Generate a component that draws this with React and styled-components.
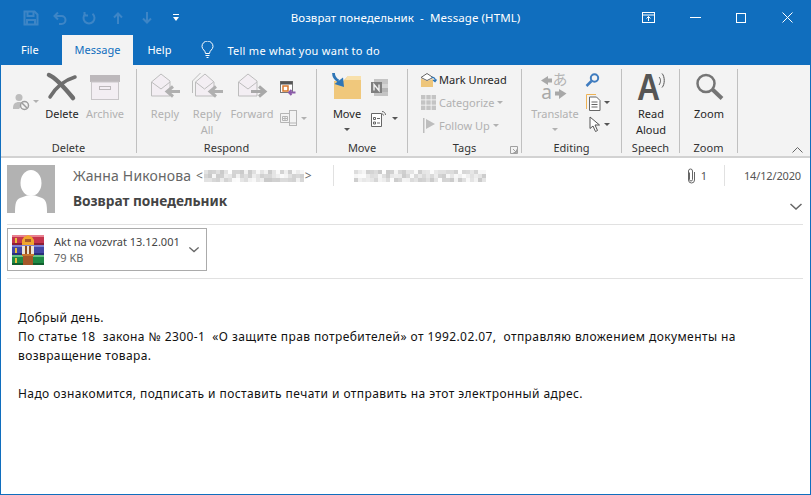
import React from 'react';
import styled, { createGlobalStyle } from 'styled-components';

const GlobalStyle = createGlobalStyle`
  html, body {
    margin: 0;
    padding: 0;
    background: #ffffff;
  }
  body {
    font-family: "Noto Sans", "Open Sans", sans-serif;
    font-size: 12px;
    color: #262626;
    overflow: hidden;
  }
`;

const Window = styled.div`
  width: 811px;
  height: 495px;
  box-sizing: border-box;
  border-left: 1px solid #106ebe;
  border-right: 1px solid #106ebe;
  border-bottom: 1px solid #106ebe;
  display: flex;
  flex-direction: column;
  background: #fff;
  overflow: hidden;
`;

const TitleBar = styled.div`
  height: 35px;
  flex: none;
  background: #106ebe;
  color: #fff;
  display: grid;
  grid-template-columns: 1fr auto 1fr;
  align-items: center;
`;

const Qat = styled.div`
  display: flex;
  align-items: center;
  padding-left: 15px;
`;

const QatBtn = styled.div`
  width: 29px;
  display: flex;
  justify-content: center;
  svg { display: block; }
`;

const Title = styled.div`
  font-size: 11.5px;
  letter-spacing: 0.08px;
  white-space: pre;
`;

const WindowButtons = styled.div`
  display: flex;
  justify-content: flex-end;
  align-items: center;
  svg { display: block; }
`;

const WinBtn = styled.div`
  width: 46px;
  height: 32px;
  display: flex;
  align-items: center;
  justify-content: center;
`;

const TabRow = styled.div`
  height: 30px;
  flex: none;
  background: #106ebe;
  display: flex;
  align-items: stretch;
  color: #fff;
  font-size: 11px;
`;

const Tab = styled.div`
  padding: 0 ${p => p.$r}px 1px ${p => p.$l}px;
  display: flex;
  align-items: center;
  background: ${p => (p.$active ? '#f3f3f3' : 'transparent')};
  color: ${p => (p.$active ? '#106ebe' : '#fff')};
`;

const TellMe = styled.div`
  display: flex;
  align-items: center;
  gap: 13px;
  margin-left: 16px;
  letter-spacing: 0.27px;
`;

const Ribbon = styled.div`
  height: 93px;
  flex: none;
  box-sizing: border-box;
  background: #f3f3f3;
  border-bottom: 2px solid #d2d2d2;
  padding-top: 4px;
  display: flex;
  position: relative;
`;

const Group = styled.div`
  width: ${p => p.$w}px;
  flex: none;
  box-sizing: border-box;
  height: 84px;
  border-right: 1px solid #c0c0c0;
  display: flex;
  flex-direction: column;
`;

const GroupBody = styled.div`
  flex: 1;
  display: flex;
  min-height: 0;
`;

const GroupLabel = styled.div`
  height: 12px;
  flex: none;
  line-height: 14px;
  text-align: center;
  font-size: 11px;
  color: #333;
  position: relative;
`;

const Launcher = styled.svg`
  position: absolute;
  right: 3px;
  top: 5px;
`;

const Big = styled.div`
  width: ${p => p.$w}px;
  margin-left: ${p => p.$ml || 0}px;
  flex: none;
  display: flex;
  flex-direction: column;
  align-items: center;
  font-size: 11px;
  line-height: 16px;
  text-align: center;
  color: ${p => (p.$off ? '#b1b1b1' : '#262626')};
`;

const BigIcon = styled.div`
  height: 31px;
  flex: none;
  display: flex;
  align-items: flex-end;
  justify-content: center;
  margin-bottom: 6px;
  svg { display: block; overflow: visible; }
`;

const Stack = styled.div`
  width: ${p => p.$w}px;
  margin-left: ${p => p.$ml || 0}px;
  flex: none;
  display: flex;
  flex-direction: column;
  padding-top: ${p => p.$pt || 0}px;
  gap: ${p => p.$gap || 0}px;
`;

const SmallRow = styled.div`
  display: flex;
  align-items: center;
  box-sizing: border-box;
  height: ${p => p.$h || 23}px;
  gap: ${p => p.$gap ?? 3}px;
  padding-left: ${p => p.$pl || 0}px;
  padding-bottom: ${p => p.$pb || 0}px;
  font-size: 11px;
  color: ${p => (p.$off ? '#b1b1b1' : '#262626')};
  svg { display: block; flex: none; }
`;

const Caret = styled.span`
  display: inline-block;
  width: 0;
  height: 0;
  border-left: 3px solid transparent;
  border-right: 3px solid transparent;
  border-top: 3px solid ${p => p.$c || '#555'};
  margin-top: ${p => p.$mt || 0}px;
  flex: none;
`;

const CollapseBtn = styled.svg`
  position: absolute;
  right: 7px;
  bottom: 3px;
`;

const Header = styled.div`
  flex: none;
  padding: 0 7px 0 6px;
`;

const HeaderTop = styled.div`
  display: flex;
  height: 67px;
  box-sizing: border-box;
  border-bottom: 1px solid #e1e1e1;
  padding-top: 7px;
`;

const Avatar = styled.svg`
  display: block;
  flex: none;
  margin-right: 18px;
`;

const HeaderInfo = styled.div`
  flex: 1;
  min-width: 0;
  display: flex;
  flex-direction: column;
`;

const FromRow = styled.div`
  display: flex;
  align-items: center;
  height: 21px;
  font-size: 14px;
  color: #666;
  padding-right: 2px;
`;

const Sender = styled.span`
  white-space: pre;
  letter-spacing: 0.15px;
`;

const Angle = styled.span`
  font-size: 12px;
  margin: 0 1px;
`;

const Mosaic = styled.svg`
  display: block;
  flex: none;
`;

const Divider = styled.div`
  width: 1px;
  height: 21px;
  background: #e1e1e1;
  flex: none;
  margin-left: ${p => p.$ml}px;
  margin-right: ${p => p.$mr}px;
`;

const Spacer = styled.div`
  flex: 1;
`;

const AttachCount = styled.span`
  font-size: 11px;
  color: #555;
  margin: 0 17px 0 6px;
`;

const DateText = styled.span`
  font-size: 11px;
  color: #555;
  letter-spacing: -0.15px;
`;

const SubjectRow = styled.div`
  display: flex;
  align-items: center;
  justify-content: space-between;
  margin-top: 3px;
  height: 22px;
  padding-right: 1px;
  svg { margin-top: 12px; display: block; }
`;

const Subject = styled.div`
  font-size: 13.7px;
  font-weight: 700;
  color: #444;
`;

const AttachArea = styled.div`
  height: 54px;
  box-sizing: border-box;
  border-bottom: 1px solid #e1e1e1;
  padding-top: 3px;
`;

const AttachCard = styled.div`
  width: 200px;
  height: 43px;
  box-sizing: border-box;
  border: 1px solid #ababab;
  display: flex;
  align-items: center;
  padding-left: 4px;
  svg { display: block; flex: none; }
  > svg:last-child { margin-right: 7px; }
`;

const AttachText = styled.div`
  margin-left: 9px;
  flex: 1;
  font-size: 11px;
  line-height: 16px;
  color: #444;
`;

const AttachSize = styled.div`
  color: #666;
`;

const Body = styled.div`
  padding: 29px 0 0 17px;
  font-size: 12px;
  line-height: 19px;
  letter-spacing: 0.41px;
  color: #111;
`;

const BodyLine = styled.div`
  height: 19px;
  white-space: pre;
`;

// fake pixelated address, same pattern each render
const mosaicCells = (w, rows, seed) => {
  const out = [];
  let n = seed;
  for (let y = 0; y < rows; y++) {
    for (let x = 0; x < w; x++) {
      n = (n * 137 + 59) % 251;
      const v = 202 + (n % 52);
      out.push({ x, y, fill: `rgb(${v},${v},${v})` });
    }
  }
  return out;
};

const Pixelated = ({ w, rows, seed, size = 5 }) => (
  <Mosaic width={w * size} height={rows * size}>
    {mosaicCells(w, rows, seed).map(c => (
      <rect key={`${c.x}-${c.y}`} x={c.x * size} y={c.y * size} width={size} height={size} fill={c.fill} />
    ))}
  </Mosaic>
);

const SaveIcon = () => (
  <svg width="16" height="16" viewBox="0 0 16 16" fill="none" stroke="#3d85c6" strokeWidth="2">
    <path d="M1.500 1.500h10l3 3v10h-13z" />
    <path d="M4.500 2v4h6V2M4 14.500V10h8v4.500" />
  </svg>
);

const UndoIcon = () => (
  <svg width="14" height="14" viewBox="0 0 14 14" fill="none" stroke="#3d85c6" strokeWidth="2">
    <path d="M5 1.500 1.500 5 5 8.500M2 5h6.500a4 4 0 0 1 0 8H6" />
  </svg>
);

const RedoIcon = () => (
  <svg width="14" height="14" viewBox="0 0 14 14" fill="none" stroke="#3d85c6" strokeWidth="2">
    <path d="M10.500 2.800a5.500 5.500 0 1 1-7 0M2.500 1v3.500H6" />
  </svg>
);

const ArrowV = ({ down }) => (
  <svg width="10" height="12" viewBox="0 0 10 12" fill="none" stroke="#3d85c6" strokeWidth="2" style={{ transform: down ? 'rotate(180deg)' : undefined }}>
    <path d="M5 12V2M1 5.500 5 1.500l4 4" />
  </svg>
);

const CustomizeIcon = () => (
  <svg width="6" height="7" viewBox="0 0 6 7" fill="#fff">
    <rect width="6" height="1" />
    <path d="M0 3h6L3 7z" />
  </svg>
);

const RibbonDisplay = () => (
  <svg width="14" height="12" viewBox="0 0 14 12" fill="none" stroke="#fff">
    <rect x=".5" y=".5" width="12" height="10" />
    <path d="M.5 3h12" />
    <path d="M6.500 9V4.500M4.500 6.500l2-2 2 2" />
  </svg>
);

const BulbIcon = () => (
  <svg width="13" height="18" viewBox="0 0 13 18" fill="none" stroke="#fff">
    <path d="M4.500 12.500C4.500 9.500 1 8.500 1 5.500a5.500 5.500 0 0 1 11 0c0 3-3.500 4-3.500 7z" />
    <path d="M4.500 14.500h4M5.500 16.500h2" />
  </svg>
);

const IgnoreIcon = () => (
  <svg width="18" height="18" viewBox="0 0 18 18">
    <circle cx="7" cy="4.500" r="3.500" fill="#bdbdbd" />
    <path d="M1 15c0-4 2-6 6-6 2 0 3 .5 4 1.500L7 16H1z" fill="#bdbdbd" />
    <circle cx="12.500" cy="12.500" r="4" fill="#f3f3f3" stroke="#9d9d9d" strokeWidth="1.500" />
    <path d="m10 10 5 5" stroke="#9d9d9d" strokeWidth="1.500" />
  </svg>
);

const DeleteIcon = () => (
  <svg width="30" height="27" viewBox="0 0 30 27" fill="none" stroke="#6e6e6e" strokeLinecap="round">
    <path d="M2 2c7 3 15 12 24 23" strokeWidth="4.500" />
    <path d="M28 4C18 7 9 14 3 24" strokeWidth="3.500" />
  </svg>
);

const ArchiveIcon = () => (
  <svg width="30" height="25" viewBox="0 0 30 25">
    <rect y="0" width="30" height="7" fill="#bcb8bb" />
    <rect x="1.500" y="7" width="27" height="17.500" fill="#f3eef3" stroke="#c9c6c9" />
    <rect x="9.500" y="11.500" width="11" height="3" fill="none" stroke="#bcb8bb" />
  </svg>
);

const Envelope = ({ back }) => (
  <g fill="none" stroke="#bdbdbd">
    {back && <path d="M1.500 21V9l8-8" />}
    <path d={back ? 'M4.500 10 14 2l9 8v14H4.500z' : 'M1.500 10 11 2l9 7v15H1.500z'} fill="#f3eef3" />
    <path d={back ? 'm4.500 10 9 7 9-7' : 'm1.500 10 9.500 7 9-7'} />
  </g>
);

const ReplyIcon = () => (
  <svg width="31" height="28" viewBox="0 0 31 28">
    <Envelope />
    <path d="M30 19.500h-13M23 14.500l-6 5 6 5" fill="none" stroke="#b0b0b0" strokeWidth="3" />
  </svg>
);

const ReplyAllIcon = () => (
  <svg width="33" height="28" viewBox="0 0 33 28">
    <Envelope back />
    <path d="M32 19.500H19M25 14.500l-6 5 6 5" fill="none" stroke="#b0b0b0" strokeWidth="3" />
  </svg>
);

const ForwardIcon = () => (
  <svg width="31" height="28" viewBox="0 0 31 28">
    <Envelope />
    <path d="M14 19.500h14M22 14.500l6 5-6 5" fill="none" stroke="#a8a8a8" strokeWidth="3" />
  </svg>
);

const MeetingIcon = () => (
  <svg width="16" height="15" viewBox="0 0 16 15">
    <rect x=".5" y=".5" width="12" height="11" fill="#fff" stroke="#777" />
    <rect x=".5" y=".5" width="12" height="3" fill="#555" />
    <rect x="3" y="5" width="5" height="5" fill="none" stroke="#d9772b" strokeWidth="1.500" />
    <path d="M15.500 11.500H9M11.500 9l-2.500 2.500 2.500 2.500" fill="none" stroke="#8a5aa8" strokeWidth="2" />
  </svg>
);

const MoreRespondIcon = () => (
  <svg width="17" height="17" viewBox="0 0 17 17" fill="none" stroke="#b5b5b5">
    <path d="M10 3.500H.5v9H10" />
    <path d="M2.500 6.500h5v4h-5zM5 6.500v4M2.500 8.500h5" />
    <rect x="9.500" y=".5" width="7" height="15" fill="#f3f3f3" />
    <path d="M9.500 13h7" />
  </svg>
);

const FolderIcon = () => (
  <svg width="30" height="28" viewBox="0 0 30 28">
    <path d="M2 9h9l5-5h13v23H2z" fill="#f0c87c" />
    <path d="M16 4h13v4H13z" fill="#f8e0ab" />
    <path d="M1.500 1c0 4 1.500 6 5 8" fill="none" stroke="#2e75b6" strokeWidth="2.800" />
    <path d="M2.500 12 11 5.500 12 15z" fill="#2e75b6" />
  </svg>
);

const OneNoteIcon = () => (
  <svg width="17" height="17" viewBox="0 0 17 17">
    <rect x="3" width="14" height="17" fill="#c4c4c4" />
    <rect x="11" y="5" width="6" height="4" fill="#d4d4d4" />
    <rect x="11" y="9" width="6" height="4" fill="#b5b5b5" />
    <rect y="3" width="11" height="11" fill="#7f7f7f" />
    <path d="M3 11.500v-6l5 6v-6" fill="none" stroke="#f3f3f3" strokeWidth="1.400" />
  </svg>
);

const RulesIcon = () => (
  <svg width="17" height="17" viewBox="0 0 17 17" fill="none" stroke="#666">
    <path d="M.5 3.500h10v13H.5z" fill="#fff" />
    <path d="M2.500 7.500h2v2h-2zM2.500 12h2v2h-2zM6 8.500h3M6 13h3" />
    <path d="M11 1.500c2 0 3.500 1.500 3.500 3.500M11 4c1 0 1.500.500 1.500 1.500" />
  </svg>
);

const MarkUnreadIcon = () => (
  <svg width="17" height="16" viewBox="0 0 17 16">
    <path d="M1 6.500 7 9l6-2v8H1z" fill="#eec67b" />
    <path d="M1 5.500 7 1.500l6 4-6 3z" fill="#fff" stroke="#666" />
    <path d="M11.500 5.500c2.500-.5 4 1 3.500 3.500M16.500 7.500 15 9.500l-2-1.500" fill="none" stroke="#2e75b6" strokeWidth="1.300" />
  </svg>
);

const CategorizeIcon = () => (
  <svg width="15" height="15" viewBox="0 0 15 15" fill="#c4c4c4">
    {[0, 5.300, 10.600].map(x =>
      [0, 5.300, 10.600].map(y => <rect key={`${x}${y}`} x={x} y={y} width="4.400" height="4.400" />)
    )}
  </svg>
);

const FlagIcon = () => (
  <svg width="13" height="15" viewBox="0 0 13 15" fill="#bdbdbd">
    <rect width="1.500" height="15" />
    <path d="M3 1v10l9-5z" />
  </svg>
);

const TranslateIcon = () => (
  <svg width="28" height="28" viewBox="0 0 28 28">
    <path d="M0 8.500 7 4v2.500h4v4H7V13z" fill="#a8a8a8" />
    <path d="M25.500 21.500 18 17v2.500h-4v4h4V27z" fill="#a8a8a8" />
    <text x="19" y="13" textAnchor="middle" fontSize="15" fill="#b4b4b4" fontFamily="'Noto Sans CJK JP', sans-serif">あ</text>
    <text x="5.500" y="26.500" textAnchor="middle" fontSize="19" fill="#a8a8a8" fontFamily="'Noto Sans', sans-serif">a</text>
  </svg>
);

const FindIcon = () => (
  <svg width="15" height="14" viewBox="0 0 15 14" fill="none" stroke="#3f7cbf">
    <circle cx="9.500" cy="5" r="3.700" strokeWidth="2" />
    <path d="M6.500 8 1.500 13" strokeWidth="2.500" />
  </svg>
);

const RelatedIcon = () => (
  <svg width="15" height="17" viewBox="0 0 15 17" fill="none">
    <path d="M.5 15V.5H10" stroke="#eeb355" />
    <path d="M3.500 3h7l3.500 3.500v10h-10.500z" fill="#fff" stroke="#666" />
    <path d="M5.500 8h6M5.500 10.500h6M5.500 13h6" stroke="#666" />
  </svg>
);

const CursorIcon = () => (
  <svg width="12" height="16" viewBox="0 0 12 16" fill="#fff" stroke="#555">
    <path d="M1 1v11.500l3-2.500 2.500 5.500 2-1L6 9h4.500z" />
  </svg>
);

const ReadIcon = () => (
  <svg width="30" height="29" viewBox="0 0 30 29">
    <text x="1" y="28.500" fontSize="37" fontWeight="700" fill="#555" fontFamily="'Liberation Sans', sans-serif" textLength="23" lengthAdjust="spacingAndGlyphs">A</text>
    <path d="M23 6c2 2 2 5 0 8M26 2.500c3 3 3 11 0 14" fill="none" stroke="#555" />
  </svg>
);

const ZoomIcon = () => (
  <svg width="29" height="27" viewBox="0 0 29 27" fill="none" stroke="#757575">
    <circle cx="11" cy="10.500" r="8.500" strokeWidth="2.500" />
    <path d="m17.500 16.500 9.500 9" strokeWidth="4" />
  </svg>
);

const RarIcon = () => (
  <svg width="33" height="30" viewBox="0 0 33 30">
    <rect y="0" width="32" height="10" rx="1" fill="#c4344d" />
    <rect y="10" width="32" height="10" rx="1" fill="#4247a5" />
    <rect y="20" width="32" height="10" rx="1" fill="#1f8a45" />
    <rect y="0" width="32" height="2" fill="#e8808f" />
    <rect y="10" width="32" height="2" fill="#7f83d4" />
    <rect y="20" width="32" height="2" fill="#66c083" />
    <rect y="8" width="32" height="2" fill="#8e1f35" />
    <rect y="18" width="32" height="2" fill="#2b2f7a" />
    <rect y="28" width="32" height="2" fill="#115f2e" />
    <rect x="3" y="3" width="2" height="5" fill="#e9bf3a" />
    <rect x="3" y="13" width="2" height="5" fill="#e9bf3a" />
    <rect x="3" y="23" width="2" height="5" fill="#e9bf3a" />
    <path d="M12 2 16 0l4 2 2 3v5H10V5z" fill="#f0a62e" />
    <rect x="13" y="4" width="6" height="3" fill="#a5582a" />
    <rect x="11" y="19" width="10" height="11" fill="#a5582a" />
    <rect x="10" y="11" width="12" height="8" fill="#ece6d8" />
    <rect x="13" y="11" width="2" height="8" fill="#8a4a20" />
    <rect x="17" y="11" width="2" height="8" fill="#8a4a20" />
    <rect x="10" y="19" width="12" height="2" fill="#c9772f" />
  </svg>
);

const Chevron = ({ w = 12 }) => (
  <svg width={w} height="7" viewBox="0 0 12 7" fill="none" stroke="#666" strokeWidth="1.500">
    <path d="m.5 1 5.500 5 5.500-5" />
  </svg>
);

const AvatarIcon = () => (
  <Avatar width="48" height="48" viewBox="0 0 48 48">
    <rect width="48" height="48" fill="#b2b2b2" />
    <ellipse cx="24" cy="18" rx="10.500" ry="13" fill="#fff" />
    <path d="M8 48c0-10 1-13 5-15l7-2.500h8l7 2.500c4 2 5 5 5 15z" fill="#fff" />
  </Avatar>
);

const Clip = () => (
  <svg width="8" height="16" viewBox="0 0 8 16" fill="none" stroke="#666">
    <path d="M2.500 4.500v7a1.500 1.500 0 0 0 3 0V3a2 2 0 0 0-4 0v9a3 3 0 0 0 6 0V4" />
  </svg>
);

const App = () => (
  <>
    <GlobalStyle />
    <Window>
      <TitleBar>
        <Qat>
          <QatBtn><SaveIcon /></QatBtn>
          <QatBtn><UndoIcon /></QatBtn>
          <QatBtn><RedoIcon /></QatBtn>
          <QatBtn><ArrowV /></QatBtn>
          <QatBtn><ArrowV down /></QatBtn>
          <QatBtn><CustomizeIcon /></QatBtn>
        </Qat>
        <Title>Возврат понедельник  -  Message (HTML)</Title>
        <WindowButtons>
          <WinBtn><RibbonDisplay /></WinBtn>
          <WinBtn>
            <svg width="11" height="1"><rect width="11" height="1" fill="#fff" /></svg>
          </WinBtn>
          <WinBtn>
            <svg width="10" height="10" fill="none" stroke="#fff"><rect x=".5" y=".5" width="9" height="9" /></svg>
          </WinBtn>
          <WinBtn>
            <svg width="11" height="11" fill="none" stroke="#fff"><path d="m.5.500 10 10M10.500.500l-10 10" /></svg>
          </WinBtn>
        </WindowButtons>
      </TitleBar>

      <TabRow>
        <Tab $l={20} $r={23}>File</Tab>
        <Tab $l={13} $r={13} $active>Message</Tab>
        <Tab $l={14} $r={14}>Help</Tab>
        <TellMe>
          <BulbIcon />
          Tell me what you want to do
        </TellMe>
      </TabRow>

      <Ribbon>
        <Group $w={136}>
          <GroupBody>
            <Stack $w={32} $pt={21} $ml={11}>
              <SmallRow>
                <IgnoreIcon />
                <Caret $c="#b1b1b1" />
              </SmallRow>
            </Stack>
            <Big $w={36}>
              <BigIcon><DeleteIcon /></BigIcon>
              Delete
            </Big>
            <Big $w={44} $ml={3} $off>
              <BigIcon><ArchiveIcon /></BigIcon>
              Archive
            </Big>
          </GroupBody>
          <GroupLabel>Delete</GroupLabel>
        </Group>

        <Group $w={180}>
          <GroupBody>
            <Big $w={42} $ml={7} $off>
              <BigIcon><ReplyIcon /></BigIcon>
              Reply
            </Big>
            <Big $w={42} $off>
              <BigIcon><ReplyAllIcon /></BigIcon>
              Reply<br />All
            </Big>
            <Big $w={48} $off>
              <BigIcon><ForwardIcon /></BigIcon>
              Forward
            </Big>
            <Stack $w={36} $pt={8} $gap={7} $ml={4}>
              <SmallRow><MeetingIcon /></SmallRow>
              <SmallRow $gap={4}>
                <MoreRespondIcon />
                <Caret $c="#b1b1b1" />
              </SmallRow>
            </Stack>
          </GroupBody>
          <GroupLabel>Respond</GroupLabel>
        </Group>

        <Group $w={91}>
          <GroupBody>
            <Big $w={38} $ml={11}>
              <BigIcon><FolderIcon /></BigIcon>
              Move
              <Caret $mt={6} />
            </Big>
            <Stack $w={36} $pt={7} $gap={8} $ml={5}>
              <SmallRow><OneNoteIcon /></SmallRow>
              <SmallRow $gap={4}>
                <RulesIcon />
                <Caret />
              </SmallRow>
            </Stack>
          </GroupBody>
          <GroupLabel>Move</GroupLabel>
        </Group>

        <Group $w={114}>
          <GroupBody>
            <Stack $w={100} $ml={12}>
              <SmallRow $gap={2} $pb={2}><MarkUnreadIcon />Mark Unread</SmallRow>
              <SmallRow $off $pl={1} $pb={2}><CategorizeIcon />Categorize<Caret $c="#b1b1b1" /></SmallRow>
              <SmallRow $off $pl={3} $pb={2}><FlagIcon />Follow Up<Caret $c="#b1b1b1" /></SmallRow>
            </Stack>
          </GroupBody>
          <GroupLabel>
            Tags
            <Launcher width="8" height="8" viewBox="0 0 8 8" fill="none" stroke="#a0a0a0">
              <path d="M.5 7.500v-7h7v7zM3 3l3.500 3.500M6.500 3.500v3h-3" />
            </Launcher>
          </GroupLabel>
        </Group>

        <Group $w={100}>
          <GroupBody>
            <Big $w={52} $ml={7} $off>
              <BigIcon><TranslateIcon /></BigIcon>
              Translate
              <Caret $c="#b1b1b1" $mt={6} />
            </Big>
            <Stack $w={30} $ml={4}>
              <SmallRow $h={22}><FindIcon /></SmallRow>
              <SmallRow $h={22} $pl={1}><RelatedIcon /><Caret /></SmallRow>
              <SmallRow $h={22} $pl={4}><CursorIcon /><Caret /></SmallRow>
            </Stack>
          </GroupBody>
          <GroupLabel>Editing</GroupLabel>
        </Group>

        <Group $w={58}>
          <GroupBody>
            <Big $w={58}>
              <BigIcon><ReadIcon /></BigIcon>
              Read<br />Aloud
            </Big>
          </GroupBody>
          <GroupLabel>Speech</GroupLabel>
        </Group>

        <Group $w={58}>
          <GroupBody>
            <Big $w={58}>
              <BigIcon><ZoomIcon /></BigIcon>
              Zoom
            </Big>
          </GroupBody>
          <GroupLabel>Zoom</GroupLabel>
        </Group>

        <CollapseBtn width="11" height="6" viewBox="0 0 11 6" fill="none" stroke="#666">
          <path d="m.5 5.500 5-5 5 5" />
        </CollapseBtn>
      </Ribbon>

      <Header>
        <HeaderTop>
          <AvatarIcon />
          <HeaderInfo>
            <FromRow>
              <Sender>Жанна Никонова </Sender>
              <Angle>&lt;</Angle>
              <Pixelated w={25} rows={3} seed={17} size={4} />
              <Angle>&gt;</Angle>
              <Divider $ml={20} $mr={20} />
              <Pixelated w={33} rows={3} seed={91} size={4} />
              <Spacer />
              <Clip />
              <AttachCount>1</AttachCount>
              <Divider $ml={0} $mr={19} />
              <DateText>14/12/2020</DateText>
            </FromRow>
            <SubjectRow>
              <Subject>Возврат понедельник</Subject>
              <Chevron />
            </SubjectRow>
          </HeaderInfo>
        </HeaderTop>
        <AttachArea>
          <AttachCard>
            <RarIcon />
            <AttachText>
              Akt na vozvrat 13.12.001
              <AttachSize>79 KB</AttachSize>
            </AttachText>
            <Chevron w={10} />
          </AttachCard>
        </AttachArea>
      </Header>

      <Body>
        <BodyLine>Добрый день.</BodyLine>
        <BodyLine>По статье 18  закона № 2300-1  «О защите прав потребителей» от 1992.02.07,  отправляю вложением документы на</BodyLine>
        <BodyLine>возвращение товара.</BodyLine>
        <BodyLine> </BodyLine>
        <BodyLine>Надо ознакомится, подписать и поставить печати и отправить на этот электронный адрес.</BodyLine>
      </Body>
    </Window>
  </>
);

export default App;
